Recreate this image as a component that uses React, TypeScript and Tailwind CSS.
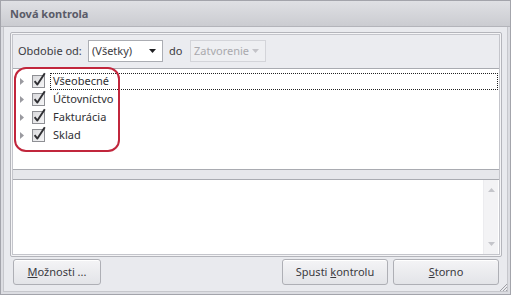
import React from "react";

const FONT = { fontFamily: '"Noto Sans", "Open Sans", sans-serif' };

function Expander() {
  return (
    <svg width="4" height="7" viewBox="0 0 4 7" className="shrink-0">
      <path d="M0 0 L4 3.5 L0 7 Z" fill="#9a9aa0" />
    </svg>
  );
}

function Check() {
  return (
    <svg width="15" height="16" viewBox="0 0 15 16" className="shrink-0 overflow-visible">
      <defs>
        <linearGradient id="cbg" x1="0" y1="0" x2="1" y2="1">
          <stop offset="0" stopColor="#d9d9dc" />
          <stop offset="1" stopColor="#f7f7f8" />
        </linearGradient>
      </defs>
      <rect x="0.5" y="3.5" width="12" height="12" fill="url(#cbg)" stroke="#8e8f94" />
      <path d="M2.6 9.2 L5.4 12.6 L12.8 1.2" fill="none" stroke="#2f2f33" strokeWidth="1.9" strokeLinejoin="round" />
    </svg>
  );
}

function Arrow({ color }: { color: string }) {
  return (
    <svg width="7" height="4" viewBox="0 0 7 4">
      <path d="M0 0 L7 0 L3.5 4 Z" fill={color} />
    </svg>
  );
}

function Btn({ w, children }: { w: string; children: React.ReactNode }) {
  return (
    <div
      className={`${w} h-[26px] rounded-[3px] border border-[#aeafb5] bg-gradient-to-b from-[#f4f4f6] to-[#e3e4e8] flex items-center justify-center text-[11px] text-[#3a3a3e] shadow-[inset_0_1px_0_#ffffff]`}
    >
      {children}
    </div>
  );
}

const items = ["Všeobecné", "Účtovníctvo", "Fakturácia", "Sklad"];

export default function App() {
  return (
    <div
      className="w-[511px] h-[295px] border border-[#a3a4ab] bg-[#dcdde2] flex flex-col relative overflow-hidden"
      style={FONT}
    >
      {/* title bar */}
      <div className="h-[26px] shrink-0 border-b border-[#b3b4ba] bg-gradient-to-b from-[#dfe0e4] to-[#cbccd1] flex items-center pl-[9px]">
        <span className="text-[11px] font-bold text-[#5a5b68] leading-none">Nová kontrola</span>
      </div>

      {/* body */}
      <div className="flex-1 mx-[2px] mb-[2px] border-x border-b border-[#c6c7cc] bg-[#e9eaee] pl-[6px] pr-[5px] pt-[5px] flex flex-col">
        {/* group */}
        <div className="w-[492px] h-[225px] border border-[#b4b5bb] rounded-[2px] p-[1px] bg-[#f4f4f6]">
          <div className="h-full border border-[#c4c5cb] bg-[#ebecf0] flex flex-col">
            {/* filter row */}
            <div className="h-[33px] shrink-0 pt-[5px] pl-[5px] flex items-start text-[11px] text-[#3b3b3f]">
              <span className="h-[22px] flex items-center w-[70px]">Obdobie od:</span>
              <div className="w-[75px] h-[22px] border border-[#abadb3] bg-white flex items-center pl-[3px] pr-[6px] justify-between">
                <span>(Všetky)</span>
                <Arrow color="#1f1f22" />
              </div>
              <span className="h-[22px] flex items-center ml-[6px] w-[21px]">do</span>
              <div className="w-[76px] h-[22px] border border-[#d3d4d9] bg-[#eeeff2] flex items-center pl-[3px] pr-[6px] justify-between text-[#a9a9ad]">
                <span>Zatvorenie</span>
                <Arrow color="#c3c3c8" />
              </div>
            </div>

            {/* tree */}
            <div className="h-[102px] shrink-0 border-y border-[#a9abb1] bg-white pt-[3px] text-[11px] text-[#2f2f33]">
              {items.map((t, i) => (
                <div key={t} className="h-[18px] flex items-center">
                  <span className="ml-[7px]">
                    <Expander />
                  </span>
                  <span className="ml-[8px] -mt-[3px]">
                    <Check />
                  </span>
                  <span
                    className={`ml-[3px] mr-[1px] flex-1 h-[17px] flex items-center pl-[2px] border border-dotted ${
                      i === 0 ? "border-[#222]" : "border-transparent"
                    }`}
                  >
                    {t}
                  </span>
                </div>
              ))}
            </div>

            {/* splitter */}
            <div className="h-[10px] shrink-0 bg-[#e6e7eb] border-b border-[#a9abb1]" />

            {/* memo */}
            <div className="flex-1 bg-white flex justify-end">
              <div className="w-[15px] bg-[#f3f3f5] border-l border-[#ececef] flex flex-col items-center justify-between py-[8px] mr-[1px]">
                <svg width="7" height="4" viewBox="0 0 7 4">
                  <path d="M0 4 L7 4 L3.5 0 Z" fill="#c4c5ca" />
                </svg>
                <Arrow color="#c4c5ca" />
              </div>
            </div>
          </div>
        </div>

        {/* buttons */}
        <div className="mt-[2px] flex items-center pr-[3px]">
          <div className="ml-[3px]">
            <Btn w="w-[88px]">
              <span>
                <span className="underline">M</span>ožnosti ...
              </span>
            </Btn>
          </div>
          <div className="flex-1" />
          <Btn w="w-[106px]">
            <span>
              Spusti <span className="underline">k</span>ontrolu
            </span>
          </Btn>
          <div className="w-[5px]" />
          <Btn w="w-[106px]">
            <span>
              <span className="underline">S</span>torno
            </span>
          </Btn>
        </div>
      </div>

      {/* size grip */}
      <svg width="10" height="10" viewBox="0 0 10 10" className="absolute right-[2px] bottom-[2px]">
        <path d="M9 2 L2 9 M9 5 L5 9 M9 8 L8 9" stroke="#9fa0a6" strokeWidth="1" />
      </svg>

      {/* red annotation */}
      <div className="absolute left-[13px] top-[66px] w-[106px] h-[85px] rounded-[12px] border-2 border-[#c1263c] pointer-events-none" />
    </div>
  );
}
